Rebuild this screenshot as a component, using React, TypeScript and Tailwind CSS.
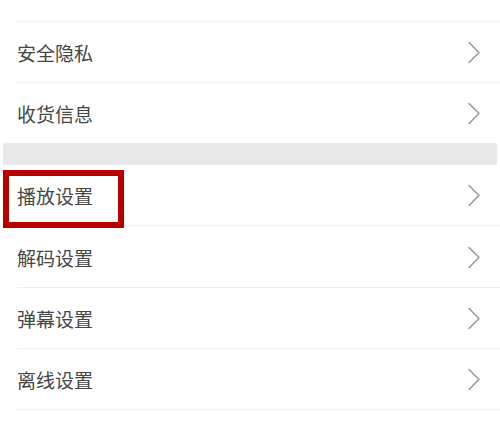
import React from 'react';

const Chevron: React.FC = () => (
  <svg width="14" height="23" viewBox="0 0 14 23" fill="none" className="shrink-0">
    <path d="M2 1.5 L12 11.5 L2 21.5" stroke="#9c9c9c" strokeWidth="1.6" strokeLinecap="round" strokeLinejoin="round" />
  </svg>
);

interface RowProps {
  label: string;
  divider?: boolean;
  highlight?: boolean;
  clipped?: boolean;
}

const Row: React.FC<RowProps> = ({ label, divider = true, highlight = false, clipped = false }) => (
  <div className="relative">
    <div
      className={
        clipped
          ? 'flex h-[60px] items-center justify-between pb-[8px] pl-[17px] pr-[19px]'
          : 'flex h-[60px] items-center justify-between pl-[17px] pr-[19px]'
      }
    >
      <span className="text-[19px] leading-none text-[#464646]">{label}</span>
      <Chevron />
    </div>
    {divider && <div className="ml-[17px] h-px bg-[#eeeeee]" />}
    {highlight && (
      <div className="pointer-events-none absolute left-[3px] top-[5px] h-[58px] w-[121px] border-[6px] border-[#b80000]" />
    )}
  </div>
);

export default function App() {
  return (
    <div
      className="h-[429px] w-[500px] overflow-hidden bg-white"
      style={{ fontFamily: '"Noto Sans CJK SC", "Noto Sans", sans-serif' }}
    >
      <div className="-mt-[39px]">
        <Row label="账号绑定" clipped />
      </div>
      <Row label="安全隐私" />
      <Row label="收货信息" divider={false} />
      <div className="mx-[3px] h-[22px] bg-[#e9e9e9]" />
      <div className="h-[62px]">
        <Row label="播放设置" highlight />
      </div>
      <Row label="解码设置" />
      <Row label="弹幕设置" />
      <Row label="离线设置" />
    </div>
  );
}
